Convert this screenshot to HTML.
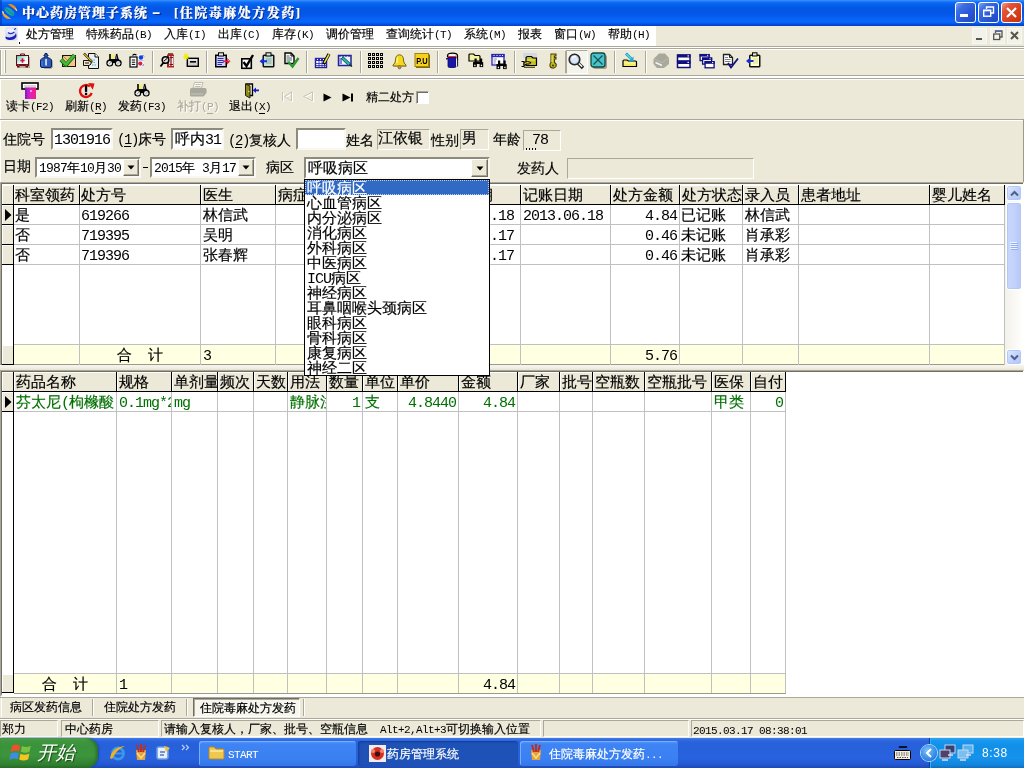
<!DOCTYPE html>
<html lang="zh-CN"><head><meta charset="utf-8"><title>中心药房管理子系统</title>
<style>
html,body{margin:0;padding:0}
body{width:1024px;height:768px;overflow:hidden;position:relative;background:#ECE9D8;font-family:"Liberation Mono","WenQuanYi Zen Hei",monospace;color:#000}
div{position:absolute;box-sizing:border-box}
svg{position:absolute;overflow:visible}
.t{position:absolute;white-space:pre;line-height:1;-webkit-text-stroke:.18px currentColor}
i{font-style:normal;-webkit-text-stroke:0}
.f12{font-size:12px}.f12 i{font-size:11px;letter-spacing:-.6px}
.f13{font-size:13px}.f13 i{letter-spacing:-.8px}
.f14{font-size:14px}.f14 i{letter-spacing:-1.4px}
.f15{font-size:15px}.f15 i{letter-spacing:-1px}
.g{color:#007000}
.w{color:#fff}
.sunk{border:1px solid;border-color:#716F64 #fff #fff #716F64;box-shadow:inset 1px 1px 0 #ACA899}
.inp{background:#fff;border:2px solid;border-color:#8D8B7C #F8F7F0 #F8F7F0 #8D8B7C}
.ro{border:1px solid;border-color:#ACA899 #fff #fff #ACA899}
.hd{background:#ECE9D8;border-right:1px solid #000;border-bottom:1px solid #000;box-shadow:inset 1px 1px 0 #fff}
</style></head>
<body>
<div id="root" style="left:0;top:0;width:1024px;height:768px;will-change:transform">
<div style="left:0px;top:0px;width:1024px;height:26px;background:linear-gradient(to bottom,#3E90FA 0,#2A84FC 1px,#0F70FA 2px,#0868F4 3px,#0560EC 5px,#0458E6 8px,#0456E4 12px,#0558EA 15px,#0660F4 18px,#0868FC 21px,#0660F4 23px,#0450DC 24px,#0340C8 26px)"></div>
<div style="left:0px;top:0px;width:2px;height:26px;background:#0238B8;opacity:.6"></div>
<span class="t w" style="left:22px;top:5px;font:900 13px/15px 'Liberation Serif','Noto Serif CJK SC',serif;letter-spacing:1px;text-shadow:1px 1px 0 #0A2A80">中心药房管理子系统</span>
<span class="t w" style="left:152px;top:5px;font:bold 13px/15px 'Liberation Sans','Noto Sans CJK SC',sans-serif;text-shadow:1px 1px 0 #0A2A80;transform:scaleX(1.9);transform-origin:0 0">-</span>
<span class="t w" style="left:174px;top:5px;font:900 13px/15px 'Liberation Serif','Noto Serif CJK SC',serif;letter-spacing:1.5px;text-shadow:1px 1px 0 #0A2A80">[住院毒麻处方发药]</span>
<svg style="left:0px;top:2px" width="20" height="20" viewBox="0 0 20 20"><defs><clipPath id="lc"><circle cx="9.5" cy="9.500" r="7.600"/></clipPath></defs><g clip-path="url(#lc)"><g transform="rotate(38 9.500 9.500)"><rect x="0" y="1.400" width="20" height="3.300" fill="#F08C1C"/><ellipse cx="9.500" cy="9.500" rx="6" ry="2.900" fill="#18A4B4"/><rect x="4" y="9" width="11" height="1" fill="#0C8898"/><rect x="0" y="14.300" width="20" height="3.300" fill="#F4A824"/></g></g><path d="M15.500 6.500 L16.800 8.800 M2.600 9 L3.600 11.500" stroke="#F4F0E8" stroke-width="1"/></svg>
<div style="left:955px;top:2px;width:21px;height:21px;border:1px solid #fff;border-radius:3px;background:linear-gradient(135deg,#7EA4F4 0,#3D6FE4 25%,#2A58D6 60%,#2048C0 100%)"></div>
<div style="left:960px;top:14px;width:8px;height:3px;background:#fff"></div>
<div style="left:978px;top:2px;width:21px;height:21px;border:1px solid #fff;border-radius:3px;background:linear-gradient(135deg,#7EA4F4 0,#3D6FE4 25%,#2A58D6 60%,#2048C0 100%)"></div>
<svg style="left:982px;top:6px" width="13" height="12" viewBox="0 0 13 12"><path d="M4.5 3 V1 H11.5 V7 H9" stroke="#fff" stroke-width="1.4" fill="none"/><rect x="1.7" y="4.2" width="7" height="6" stroke="#fff" stroke-width="1.4" fill="none"/><path d="M1.7 4.6 H8.7" stroke="#fff" stroke-width="1.4"/></svg>
<div style="left:1001px;top:2px;width:21px;height:21px;border:1px solid #fff;border-radius:3px;background:linear-gradient(135deg,#F0A088 0,#E2573A 25%,#D8401E 60%,#C43010 100%)"></div>
<svg style="left:1005px;top:6px" width="13" height="13" viewBox="0 0 13 13"><path d="M2 2 L11 11 M11 2 L2 11" stroke="#fff" stroke-width="2.2"/></svg>
<div style="left:0px;top:26px;width:656px;height:20px;background:#fff"></div>
<div style="left:0px;top:26px;width:18px;height:20px;background:#F6F4EA"></div>
<div style="left:0px;top:46px;width:1024px;height:1px;background:#ACA899"></div>
<div style="left:0px;top:47px;width:1024px;height:1px;background:#fff"></div>
<svg style="left:4px;top:27px" width="15" height="15" viewBox="0 0 15 15"><rect x="1.500" y="0.500" width="12" height="13" rx="2" fill="#D4D8F8"/><rect x="2.500" y="1.500" width="10" height="5" rx="1" fill="#EEF0FF"/><path d="M11.500 2 Q13 6.500 10 9 Q6 11.500 1.500 9.500 Q1 12.500 5 13 Q10.500 13.500 12.500 9.500" fill="#1A20B0"/><path d="M4 5.500 Q7 8 10.500 5" stroke="#2830B8" stroke-width="1.300" fill="none"/><path d="M10 2.500 L12 1.500" stroke="#2028B0" stroke-width="1.200"/></svg>
<div style="left:19px;top:42px;width:1px;height:2px;background:#000"></div>
<span class="t f12 " style="left:26px;top:29px;">处方管理</span>
<span class="t f12 " style="left:86px;top:29px;">特殊药品<i>(B)</i></span>
<span class="t f12 " style="left:164px;top:29px;">入库<i>(I)</i></span>
<span class="t f12 " style="left:218px;top:29px;">出库<i>(C)</i></span>
<span class="t f12 " style="left:272px;top:29px;">库存<i>(K)</i></span>
<span class="t f12 " style="left:326px;top:29px;">调价管理</span>
<span class="t f12 " style="left:386px;top:29px;">查询统计<i>(T)</i></span>
<span class="t f12 " style="left:464px;top:29px;">系统<i>(M)</i></span>
<span class="t f12 " style="left:518px;top:29px;">报表</span>
<span class="t f12 " style="left:554px;top:29px;">窗口<i>(W)</i></span>
<span class="t f12 " style="left:608px;top:29px;">帮助<i>(H)</i></span>
<div style="left:972px;top:28px;width:15px;height:16px;background:#F3F2EA;border:1px solid #F8F8F2"></div>
<div style="left:990px;top:28px;width:15px;height:16px;background:#F3F2EA;border:1px solid #F8F8F2"></div>
<div style="left:1007px;top:28px;width:15px;height:16px;background:#F3F2EA;border:1px solid #F8F8F2"></div>
<div style="left:976px;top:38px;width:6px;height:2px;background:#55554A"></div>
<svg style="left:993px;top:30px" width="10" height="11" viewBox="0 0 10 11"><path d="M2.5 3 V1 H9 V7 H7" stroke="#55554A" stroke-width="1.3" fill="none"/><rect x="0.7" y="4" width="6" height="5.5" stroke="#55554A" stroke-width="1.3" fill="none"/><path d="M2.5 1.3 H9" stroke="#4466CC" stroke-width="1"/></svg>
<svg style="left:1010px;top:31px" width="9" height="9" viewBox="0 0 9 9"><path d="M1 1 L8 8 M8 1 L1 8" stroke="#55554A" stroke-width="2"/></svg>
<div style="left:0px;top:48px;width:1px;height:27px;background:#ACA899"></div>
<div style="left:1px;top:48px;width:1px;height:27px;background:#fff"></div>
<div style="left:4px;top:50px;width:1px;height:23px;background:#fff"></div>
<div style="left:5px;top:50px;width:1px;height:23px;background:#ACA899"></div>
<div style="left:0px;top:75px;width:1024px;height:1px;background:#ACA899"></div>
<div style="left:0px;top:76px;width:1024px;height:2px;background:#fff"></div>
<div style="left:0px;top:48px;width:1024px;height:1px;background:#ACA899"></div>
<div style="left:0px;top:49px;width:1024px;height:1px;background:#fff"></div>
<div style="left:0px;top:78px;width:1024px;height:1px;background:#ACA899"></div>
<div style="left:0px;top:79px;width:1024px;height:1px;background:#fff"></div>
<div style="left:152px;top:51px;width:1px;height:22px;background:#ACA899"></div>
<div style="left:153px;top:51px;width:1px;height:22px;background:#fff"></div>
<div style="left:206px;top:51px;width:1px;height:22px;background:#ACA899"></div>
<div style="left:207px;top:51px;width:1px;height:22px;background:#fff"></div>
<div style="left:306px;top:51px;width:1px;height:22px;background:#ACA899"></div>
<div style="left:307px;top:51px;width:1px;height:22px;background:#fff"></div>
<div style="left:360px;top:51px;width:1px;height:22px;background:#ACA899"></div>
<div style="left:361px;top:51px;width:1px;height:22px;background:#fff"></div>
<div style="left:437px;top:51px;width:1px;height:22px;background:#ACA899"></div>
<div style="left:438px;top:51px;width:1px;height:22px;background:#fff"></div>
<div style="left:514px;top:51px;width:1px;height:22px;background:#ACA899"></div>
<div style="left:515px;top:51px;width:1px;height:22px;background:#fff"></div>
<div style="left:565px;top:51px;width:1px;height:22px;background:#ACA899"></div>
<div style="left:566px;top:51px;width:1px;height:22px;background:#fff"></div>
<div style="left:614px;top:51px;width:1px;height:22px;background:#ACA899"></div>
<div style="left:615px;top:51px;width:1px;height:22px;background:#fff"></div>
<div style="left:645px;top:51px;width:1px;height:22px;background:#ACA899"></div>
<div style="left:646px;top:51px;width:1px;height:22px;background:#fff"></div>
<div style="left:566px;top:50px;width:22px;height:24px;background:#F4F3EC;border:1px solid;border-color:#ACA899 #fff #fff #ACA899"></div>
<svg style="left:15px;top:53px" width="16" height="16" viewBox="0 0 16 16"><defs><linearGradient id="mk" x1="0" y1="0" x2="1" y2="1"><stop offset="0" stop-color="#48C0B0"/><stop offset=".55" stop-color="#E8FAF6"/><stop offset="1" stop-color="#fff"/></linearGradient></defs><rect x="3" y="4" width="12" height="11" fill="#A09C8C" opacity=".75"/><path d="M5.500 2.500 V1 H9.500 V2.500" stroke="#5C0C14" fill="none"/><rect x="1.500" y="2.500" width="12" height="9" fill="url(#mk)" stroke="#5C0C14"/><path d="M7.500 5.300 V9.700 M5.300 7.500 H9.700" stroke="#E01030" stroke-width="1.700"/><rect x="1" y="11" width="13" height="2" fill="#701018"/><rect x="2" y="13" width="2.500" height="1.500" fill="#5C0C14"/><rect x="10.500" y="13" width="2.500" height="1.500" fill="#5C0C14"/><circle cx="3.300" cy="12.200" r=".6" fill="#E05060"/><circle cx="11.700" cy="12.200" r=".6" fill="#E05060"/></svg>
<svg style="left:39px;top:53px" width="16" height="16" viewBox="0 0 16 16"><path d="M3.500 8 Q3.500 6 6 5.500 H10 Q13.300 6 13.300 8.500 V14 Q13.300 15.300 12 15.300 H5" stroke="#8C8A7C" fill="#8C8A7C" opacity=".7"/><path d="M6 0.500 H8 V2 H9 V3 H8 V4.500 Q12.500 5.200 12.500 8 V13 Q12.500 14.500 11 14.500 H3 Q1.500 14.500 1.500 13 V8 Q1.500 5.200 6 4.500 V3 H5 V2 H6 Z" fill="#2A5CB8" stroke="#0A1E60"/><rect x="6.300" y="6" width="1.500" height="6.500" fill="#F0F4FF"/><path d="M3 8 V13" stroke="#5088E0"/></svg>
<svg style="left:60px;top:53px" width="16" height="16" viewBox="0 0 16 16"><rect x="2.500" y="2.500" width="13" height="11" fill="#F0C888" stroke="#1A1408"/><path d="M3 3 L9 9 L15 3" stroke="#B08850" fill="none"/><path d="M1 6.500 L6 12 L14.500 2" stroke="#1F6A18" stroke-width="4.200" fill="none" stroke-linejoin="round"/><path d="M1.300 6.700 L6 11.600 L14.200 2.200" stroke="#48B838" stroke-width="2.600" fill="none" stroke-linejoin="round"/></svg>
<svg style="left:83px;top:53px" width="16" height="16" viewBox="0 0 16 16"><path d="M5.500 0.500 H12 L15.500 4 V15.500 H5.500 Z" fill="#E4F0F4" stroke="#101010"/><path d="M12 0.500 V4 H15.500" stroke="#101010" fill="#fff"/><path d="M8 7 H13 M8 9.500 H13 M9 12 H13" stroke="#70A0A8" stroke-dasharray="1.500 1"/><path d="M1 0.500 L9 9" stroke="#201000" stroke-width="2.400"/><path d="M1.300 0.800 L8.500 8.500" stroke="#E8C030" stroke-width="1.200"/><path d="M0.500 7.500 H5 L8 8.500 V11 L6 12.500 H0.500 Z" fill="#F4E8C8" stroke="#101010"/><path d="M2 10 H6" stroke="#101010"/></svg>
<svg style="left:106px;top:53px" width="16" height="16" viewBox="0 0 16 16"><path d="M4 1 V7 M10.500 1 L12 7" stroke="#000" stroke-width="1.600"/><rect x="5" y="2" width="4" height="4" fill="#F4F060"/><path d="M9 2 L11 6 H9 Z" fill="#3040C0"/><rect x="3" y="6" width="10" height="4" fill="#000"/><circle cx="3.800" cy="10" r="3.500" fill="#000"/><circle cx="12.200" cy="10" r="3.500" fill="#000"/><circle cx="3.800" cy="10.300" r="2.200" fill="#E8E8E8"/><circle cx="12.200" cy="10.300" r="2.200" fill="#E8E8E8"/><path d="M2.500 11.500 L5 9 M11 11.500 L13.500 9" stroke="#A0A0A0"/></svg>
<svg style="left:129px;top:53px" width="16" height="16" viewBox="0 0 16 16"><path d="M3.500 2.500 Q5 0.500 7.500 2" stroke="#000" fill="none" stroke-width="1.100"/><rect x="1" y="4" width="7" height="10" fill="#fff" stroke="#000" stroke-width="1.200"/><path d="M2.800 7 H6.200 M2.800 9.200 H6.200 M2.800 11.400 H6.200" stroke="#000" stroke-width="1"/><path d="M8.800 2 Q12 -0.300 15.500 2.500 L14.200 8 L15.500 13 Q12 15 9.200 13.500 L10 8 Z" fill="#F4F4FF"/><circle cx="12" cy="4.500" r="2.200" fill="#1840E0"/><circle cx="11.300" cy="10.600" r="2.100" fill="#E02030"/><path d="M9.500 7.600 H14.500" stroke="#B8C0F0"/><path d="M13.500 2 L15 3.500 M13.500 12.800 L15 11.500" stroke="#1830C0" stroke-width=".8"/></svg>
<svg style="left:160px;top:53px" width="16" height="16" viewBox="0 0 16 16"><path d="M7 1.500 H14 V14.500 H7 Z" fill="#B02020"/><rect x="9" y="3" width="4.500" height="10" fill="#F4ECEC"/><path d="M11 3 V13 M9.500 4.500 H13 M9.500 11.500 H13" stroke="#801010" stroke-width="1.200"/><path d="M8 1 H13" stroke="#801818" stroke-width="1.500"/><circle cx="5.500" cy="7" r="3.300" fill="#E8D8D8" stroke="#000" stroke-width="1.600"/><path d="M3.500 9.500 L0.500 13.500" stroke="#000" stroke-width="1.800"/><path d="M4 8 L7 5.500" stroke="#000"/></svg>
<svg style="left:183px;top:53px" width="16" height="16" viewBox="0 0 16 16"><rect x="4.300" y="5.300" width="11" height="8" fill="#D0D0D0" stroke="#000" stroke-width="1.400"/><rect x="7" y="8" width="6" height="1.600" fill="#000"/><path d="M5.500 7 H14" stroke="#F4F4F4"/><path d="M3 0 V7 M0 3.500 H6 M0.800 1.200 L5.200 5.800 M5.200 1.200 L0.800 5.800" stroke="#F0F000" stroke-width="1.100"/></svg>
<svg style="left:214px;top:52px" width="16" height="16" viewBox="0 0 16 16"><rect x="1" y="2.500" width="12" height="13" fill="#000"/><rect x="2.500" y="4" width="9" height="10" fill="#D0D0F8"/><rect x="4.500" y="0.800" width="5" height="3.200" fill="#E8E8E8" stroke="#000"/><path d="M3.500 6.500 H9.500 M3.500 8.500 H9.500 M3.500 10.500 H9.500 M3.500 12.500 H8" stroke="#2030C0" stroke-width="1.200"/><path d="M9 8.500 H13 V6 L16.500 9.300 L13 12.500 V10 H9 Z" fill="#F01828"/><path d="M13.500 7.500 L15.500 9.300" stroke="#F890C0"/></svg>
<svg style="left:240px;top:54px" width="16" height="16" viewBox="0 0 16 16"><rect x="1.800" y="4.800" width="9.500" height="9.500" fill="#fff" stroke="#000" stroke-width="1.600"/><path d="M3.500 8 L6.500 12 L13 1" stroke="#000" stroke-width="2.400" fill="none"/></svg>
<svg style="left:259px;top:52px" width="16" height="16" viewBox="0 0 16 16"><rect x="3.500" y="2.500" width="12" height="13" rx="1.500" fill="#101010"/><rect x="5" y="4" width="9" height="10" fill="#C4E0D4"/><rect x="7" y="0.800" width="5" height="3.200" fill="#D8E8E0" stroke="#000"/><path d="M7 7 H12.500 M7 9 H12.500 M7 11 H12.500" stroke="#88A8A0"/><path d="M8 8.300 H4.500 V6 L0.500 9.200 L4.500 12.500 V10.200 H8 Z" fill="#1030E0"/></svg>
<svg style="left:283px;top:52px" width="16" height="16" viewBox="0 0 16 16"><path d="M2 1 H8 L11 4 V11.500 H2 Z" fill="#fff" stroke="#000" stroke-width="1.400"/><path d="M8 1 V4 H11" stroke="#000" fill="none"/><path d="M3.500 4 H6.500 M3.500 6 H9 M3.500 8 H9 M3.500 10 H7" stroke="#406860" stroke-width="1.100"/><path d="M5.500 10 L9.500 14.500 L15.500 6" stroke="#2C9830" stroke-width="2.400" fill="none"/></svg>
<svg style="left:314px;top:53px" width="16" height="16" viewBox="0 0 16 16"><rect x="1.500" y="5.500" width="11" height="9" fill="#fff" stroke="#2020A0" stroke-width="1.400"/><rect x="1" y="5" width="12" height="3" fill="#2828B0"/><path d="M2 10.500 H12.500 M2 12.500 H12.500 M5 8 V14 M8 8 V14 M10.500 8 V14" stroke="#3838B0" stroke-width=".9"/><path d="M3 6.500 H4 M6 6.500 H7 M9 6.500 H10" stroke="#fff"/><path d="M15 1 L9.500 11" stroke="#000" stroke-width="3.200"/><path d="M15 1.300 L10.300 9.800" stroke="#F0E040" stroke-width="1.600"/></svg>
<svg style="left:337px;top:54px" width="16" height="16" viewBox="0 0 16 16"><rect x="1.500" y="1.500" width="12.500" height="10" fill="#F4F4FF" stroke="#2020A0" stroke-width="1.500"/><path d="M3 1 V3 M6 1 V3 M9 1 V3 M12 1 V3" stroke="#2020A0"/><path d="M2.500 5 H5 M2.500 7 H5 M2.500 9 H5" stroke="#2020A0"/><path d="M5 3.500 L13 11" stroke="#085858" stroke-width="3.400"/><path d="M5.500 4 L12.500 10.500" stroke="#30B8B0" stroke-width="1.800"/><path d="M12.500 10.500 L15 12.500" stroke="#202020" stroke-width="1.400"/></svg>
<svg style="left:368px;top:53px" width="16" height="16" viewBox="0 0 16 16"><rect x="0" y="0" width="3" height="3" fill="#000"/><rect x="1" y="1" width="1" height="1" fill="#ECE9D8"/><rect x="4" y="0" width="3" height="3" fill="#000"/><rect x="5" y="1" width="1" height="1" fill="#ECE9D8"/><rect x="8" y="0" width="3" height="3" fill="#000"/><rect x="9" y="1" width="1" height="1" fill="#ECE9D8"/><rect x="12" y="0" width="3" height="3" fill="#000"/><rect x="13" y="1" width="1" height="1" fill="#ECE9D8"/><rect x="0" y="4" width="3" height="3" fill="#000"/><rect x="1" y="5" width="1" height="1" fill="#ECE9D8"/><rect x="4" y="4" width="3" height="3" fill="#000"/><rect x="5" y="5" width="1" height="1" fill="#ECE9D8"/><rect x="8" y="4" width="3" height="3" fill="#000"/><rect x="9" y="5" width="1" height="1" fill="#ECE9D8"/><rect x="12" y="4" width="3" height="3" fill="#000"/><rect x="13" y="5" width="1" height="1" fill="#ECE9D8"/><rect x="0" y="8" width="3" height="3" fill="#000"/><rect x="1" y="9" width="1" height="1" fill="#ECE9D8"/><rect x="4" y="8" width="3" height="3" fill="#000"/><rect x="5" y="9" width="1" height="1" fill="#ECE9D8"/><rect x="8" y="8" width="3" height="3" fill="#000"/><rect x="9" y="9" width="1" height="1" fill="#ECE9D8"/><rect x="12" y="8" width="3" height="3" fill="#000"/><rect x="13" y="9" width="1" height="1" fill="#ECE9D8"/><rect x="0" y="12" width="3" height="3" fill="#000"/><rect x="1" y="13" width="1" height="1" fill="#ECE9D8"/><rect x="4" y="12" width="3" height="3" fill="#000"/><rect x="5" y="13" width="1" height="1" fill="#ECE9D8"/><rect x="8" y="12" width="3" height="3" fill="#000"/><rect x="9" y="13" width="1" height="1" fill="#ECE9D8"/><rect x="12" y="12" width="3" height="3" fill="#000"/><rect x="13" y="13" width="1" height="1" fill="#ECE9D8"/></svg>
<svg style="left:392px;top:54px" width="16" height="16" viewBox="0 0 16 16"><path d="M7.500 0.800 Q11.500 1 11.500 6 Q11.500 9.500 14 11 V12 H1 V11 Q3.500 9.500 3.500 6 Q3.500 1 7.500 0.800 Z" fill="#F4D820" stroke="#786410" stroke-width="1"/><path d="M5.500 3.500 Q5 6 5 9" stroke="#FFF8A0" stroke-width="1.300" fill="none"/><circle cx="7.500" cy="13.300" r="1.500" fill="#C8A010" stroke="#604C08" stroke-width=".7"/><path d="M2 12.500 H14.500" stroke="#8C8A7C" opacity=".7"/></svg>
<svg style="left:414px;top:52px" width="16" height="16" viewBox="0 0 16 16"><rect x="2" y="2.500" width="14" height="13.500" fill="#7C6C10"/><rect x="1" y="1.500" width="13.500" height="13" fill="#F8D020" stroke="#9C8410" stroke-width="1"/><text x="2.200" y="11.500" font-family="Liberation Sans,sans-serif" font-weight="bold" font-size="8.500" fill="#000" textLength="11.500" lengthAdjust="spacingAndGlyphs">P.U</text></svg>
<svg style="left:444px;top:52px" width="16" height="16" viewBox="0 0 16 16"><path d="M3.500 5 V3.500 Q3.500 1.200 8.500 1.200 Q13.500 1.200 13.500 3.500 V8" stroke="#000" stroke-width="1.200" fill="none"/><path d="M4 3.500 H12.500 V6 H4 Z" fill="#E83030"/><path d="M5 3.300 H11.500" stroke="#fff" stroke-width="1.300"/><path d="M2 7 L4 5.500 H12 V14 Q12 15.500 10.500 15.500 H5.500 Q4 15.500 4 14 V7 Z" fill="#1818A8" stroke="#080860" stroke-width=".8"/><path d="M12.600 6.500 V14" stroke="#F0F0FF" stroke-width="1.100"/><path d="M13.600 7 V14.500" stroke="#000" stroke-width=".9"/></svg>
<svg style="left:468px;top:53px" width="16" height="16" viewBox="0 0 16 16"><path d="M1 2 Q1 1 2 1 H5.500 L7 2.500 H11 Q12 2.500 12 3.500 V8 H1 Z" fill="#F4F49C" stroke="#000" stroke-width="1.200"/><rect x="6.5" y="5.5" width="2.200" height="8" fill="#000"/><rect x="12" y="5.5" width="2.200" height="8" fill="#000"/><rect x="5" y="9.1" width="3.600" height="5" fill="#000"/><rect x="11.6" y="9.1" width="3.600" height="5" fill="#000"/><rect x="8" y="8.5" width="4" height="2.500" fill="#000"/><rect x="6.2" y="11.7" width="1.300" height="1.500" fill="#fff"/><rect x="12.8" y="11.7" width="1.300" height="1.500" fill="#fff"/></svg>
<svg style="left:491px;top:53px" width="17" height="17" viewBox="0 0 17 17"><rect x="1" y="1.500" width="12" height="10.500" fill="#fff" stroke="#2828B0" stroke-width="1.300"/><rect x="0.500" y="1" width="13" height="3.200" fill="#2828B0"/><path d="M2.500 2.500 H3.500 M5.500 2.500 H6.500 M8.500 2.500 H9.500 M11 2.500 H12" stroke="#fff"/><path d="M2.500 6 H6 M2.500 8 H5 M2.500 10 H4.500" stroke="#8888C8"/><rect x="7.0" y="7.5" width="2.200" height="8" fill="#000"/><rect x="12.5" y="7.5" width="2.200" height="8" fill="#000"/><rect x="5.5" y="11.1" width="3.600" height="5" fill="#000"/><rect x="12.1" y="11.1" width="3.600" height="5" fill="#000"/><rect x="8.5" y="10.5" width="4" height="2.500" fill="#000"/><rect x="6.7" y="13.7" width="1.300" height="1.500" fill="#fff"/><rect x="13.3" y="13.7" width="1.300" height="1.500" fill="#fff"/></svg>
<svg style="left:521px;top:52px" width="16" height="16" viewBox="0 0 16 16"><rect x="2" y="1" width="14" height="5" fill="#D4D8E4"/><path d="M5 6.500 Q5 4.500 7 4.500 H10.500 L12 6 H15.500 V13.500 H5 Z" fill="#C8C020" stroke="#000" stroke-width="1.200"/><path d="M6 8 H14" stroke="#ECE870"/><path d="M0.500 9.500 H3 V14.500 H0.500" stroke="#000" fill="none" stroke-width="1.100"/><path d="M3 10.500 L6.500 9.500 L10 10.500 L8.500 12 H5 L3 13.500 Z" fill="#D8D040" stroke="#000" stroke-width="1"/><path d="M3 15.300 H14" stroke="#504808" stroke-width="1.200"/></svg>
<svg style="left:545px;top:53px" width="16" height="16" viewBox="0 0 16 16"><path d="M6 1 H11 V3 H9.500 V4.500 H11 V6 H9.500 V9.500 Q12 11 11 13.500 Q9.500 15.500 7.500 15 Q4.500 14.500 5 11.500 Q5.300 10 6 9.500 Z" fill="#C4BC18" stroke="#484008" stroke-width="1.100"/><circle cx="8" cy="12.500" r="1.100" fill="#484008"/><path d="M7 2 V9" stroke="#F0EC80"/></svg>
<svg style="left:568px;top:53px" width="16" height="16" viewBox="0 0 16 16"><path d="M10 10 L15 15" stroke="#202020" stroke-width="3.400"/><path d="M10 9.600 L14.200 13.800" stroke="#F4F4F4" stroke-width="1.500"/><circle cx="6.500" cy="6.500" r="5.300" fill="#B8C4D8" stroke="#282828" stroke-width="1.600"/><circle cx="6.500" cy="6.500" r="3.600" fill="#DCE8F8"/><path d="M4 5 Q5.500 3 8 3.500" stroke="#fff" stroke-width="1.600" fill="none"/></svg>
<svg style="left:590px;top:52px" width="18" height="18" viewBox="0 0 18 18"><rect x="3" y="3" width="14" height="14" rx="2" fill="#8C8478" opacity=".75"/><rect x="1" y="1" width="14" height="14" rx="2.500" fill="#48C4C4" stroke="#104848" stroke-width="1.300"/><path d="M3.500 3.500 L12.500 12.500 M12.500 3.500 L3.500 12.500" stroke="#105060" stroke-width="1.200"/></svg>
<svg style="left:622px;top:53px" width="16" height="16" viewBox="0 0 16 16"><path d="M1 8 Q1 7 2 7 H5 L6.500 8 H13.500 Q14.500 8 14.500 9 V13.500 H1 Z" fill="#F4E860" stroke="#000" stroke-width="1.200"/><path d="M2 10 H13.500" stroke="#FCF8B0"/><path d="M4 0.500 L10 6.500" stroke="#1890C8" stroke-width="2.600"/><path d="M4.500 1 L9.500 6" stroke="#50E0F0" stroke-width="1.300"/><path d="M11.500 3.500 V8.500 H6.500 Z" fill="#20A8D8"/></svg>
<svg style="left:653px;top:53px" width="17" height="16" viewBox="0 0 17 16"><path d="M6 0.500 H12 L16 5 V11 L11 15 H4 L0.500 11 V6 Z" fill="#A8A89C"/><path d="M2.500 9.500 L9 12.500" stroke="#F4F4F0" stroke-width="1.400"/><path d="M1 6 L9 9.500 L15.500 5" stroke="#B8B8AC" fill="none"/></svg>
<svg style="left:676px;top:54px" width="16" height="16" viewBox="0 0 16 16"><rect x="1.500" y="1" width="12.500" height="6" fill="#fff" stroke="#101080" stroke-width="1.500"/><rect x="1" y="0.500" width="13.500" height="3" fill="#101080"/><rect x="1.500" y="7.500" width="12.500" height="6" fill="#fff" stroke="#101080" stroke-width="1.500"/><rect x="1" y="7" width="13.500" height="3" fill="#101080"/><rect x="11.500" y="1.300" width="1.400" height="1.200" fill="#fff"/><rect x="11.500" y="7.800" width="1.400" height="1.200" fill="#fff"/></svg>
<svg style="left:699px;top:53px" width="17" height="16" viewBox="0 0 17 16"><rect x="1.1" y="1.6" width="9" height="6" fill="#fff" stroke="#101080" stroke-width="1.300"/><rect x="0.5" y="1" width="10.200" height="2.600" fill="#101080"/><rect x="8.0" y="1.8" width="1.200" height="1" fill="#fff"/><rect x="3.6" y="5.1" width="9" height="6" fill="#fff" stroke="#101080" stroke-width="1.300"/><rect x="3" y="4.5" width="10.200" height="2.600" fill="#101080"/><rect x="10.5" y="5.3" width="1.200" height="1" fill="#fff"/><rect x="6.1" y="8.799999999999999" width="9" height="6" fill="#fff" stroke="#101080" stroke-width="1.300"/><rect x="5.5" y="8.2" width="10.200" height="2.600" fill="#101080"/><rect x="13.0" y="9.0" width="1.200" height="1" fill="#fff"/></svg>
<svg style="left:722px;top:53px" width="17" height="16" viewBox="0 0 17 16"><path d="M1.500 1.500 H7.500 L10.500 4.500 V11.500 H1.500 Z" fill="#fff" stroke="#202020" stroke-width="1.300"/><path d="M7.500 1.500 V4.500 H10.500" stroke="#202020" fill="none"/><path d="M3 4.500 H6 M3 6.500 H8.500 M3 8.500 H8.500" stroke="#808080" stroke-width="1.100"/><path d="M6 10 L9 14.500 L16 5.500" stroke="#101080" stroke-width="1.800" fill="none"/></svg>
<svg style="left:745px;top:52px" width="16" height="16" viewBox="0 0 16 16"><rect x="4" y="2.500" width="11.500" height="13" rx="1.500" fill="#101010"/><rect x="5.500" y="4" width="8.500" height="10" fill="#FFFFC4"/><rect x="7.500" y="0.800" width="4.500" height="3.200" fill="#E0E0D0" stroke="#000"/><path d="M8 7 H13 M8 9 H13 M8 11 H13" stroke="#D8D8A0"/><path d="M8.500 8 H5 V5.800 L1 9 L5 12.200 V10 H8.500 Z" fill="#1030D0"/></svg>
<svg style="left:21px;top:82px" width="18" height="18" viewBox="0 0 18 18"><rect x="1" y="1" width="16" height="6" fill="#fff" stroke="#000" stroke-width="1.600"/><rect x="3" y="3" width="12" height="3" fill="#D8D8D8"/><defs><linearGradient id="cg" x1="0" x2="1"><stop offset="0" stop-color="#9020D0"/><stop offset=".5" stop-color="#E020C0"/><stop offset="1" stop-color="#F02080"/></linearGradient></defs><rect x="4" y="5.500" width="11" height="11.500" fill="url(#cg)"/><circle cx="10" cy="9" r="1" fill="#F8C0E0"/><path d="M5 7 V16" stroke="#6010A0" stroke-dasharray="1 1"/></svg>
<svg style="left:78px;top:82px" width="17" height="17" viewBox="0 0 17 17"><path d="M11.900 4.400 A6 6 0 1 0 13.700 11" stroke="#E01010" stroke-width="2.300" fill="none"/><path d="M10.200 1 L16.500 1.600 L14.800 7.800 Z" fill="#E01010"/><rect x="6.900" y="3.300" width="2.300" height="6.600" fill="#000"/><rect x="6.900" y="10.800" width="2.300" height="2.300" fill="#000"/></svg>
<svg style="left:134px;top:83px" width="16" height="16" viewBox="0 0 16 16"><path d="M4 1 V7 M10.500 1 L12 7" stroke="#000" stroke-width="1.600"/><rect x="5" y="2" width="4" height="4" fill="#F4F060"/><path d="M9 2 L11 6 H9 Z" fill="#3040C0"/><rect x="3" y="6" width="10" height="4" fill="#000"/><circle cx="3.800" cy="10" r="3.500" fill="#000"/><circle cx="12.200" cy="10" r="3.500" fill="#000"/><circle cx="3.800" cy="10.300" r="2.200" fill="#E8E8E8"/><circle cx="12.200" cy="10.300" r="2.200" fill="#E8E8E8"/><path d="M2.500 11.500 L5 9 M11 11.500 L13.500 9" stroke="#A0A0A0"/></svg>
<svg style="left:190px;top:82px" width="17" height="16" viewBox="0 0 17 16"><path d="M4.500 0.500 H13 L11.500 6 H3 Z" fill="#F8F8F4" stroke="#B0AEA0" stroke-width=".8"/><path d="M5.500 2.500 H11 M5 4.500 H10.500" stroke="#C0BEB0"/><path d="M1.500 6 H15 Q16.500 6 16.500 7.500 V11 L13.500 14.500 H1.500 Q0 14.500 0 13 V7.500 Q0 6 1.500 6 Z" fill="#A8A89C"/><path d="M1 12 H13" stroke="#C4C4B8"/></svg>
<svg style="left:244px;top:83px" width="16" height="16" viewBox="0 0 16 16"><path d="M1.500 1 H8.500 V12.500 H6" stroke="#000" stroke-width="1.300" fill="none"/><path d="M1.500 1 L6 3 V15 L1.500 12.500 Z" fill="#8C8820" stroke="#202000" stroke-width="1"/><circle cx="4.800" cy="8.500" r=".7" fill="#F8F060"/><path d="M15 6.500 H12 V4.500 L8.800 7.300 L12 10 V8.200 H15 Z" fill="#1020C0"/></svg>
<div style="left:0px;top:119px;width:1024px;height:1px;background:#ACA899"></div>
<div style="left:0px;top:120px;width:1024px;height:1px;background:#fff"></div>
<span class="t f12 " style="left:6px;top:101px;">读卡<i>(F2)</i></span>
<span class="t f12 " style="left:65px;top:101px;">刷新<i>(R)</i></span>
<span class="t f12 " style="left:118px;top:101px;">发药<i>(F3)</i></span>
<span class="t f12 " style="left:178px;top:102px;color:#fff">补打<i>(P)</i></span>
<span class="t f12 " style="left:177px;top:101px;color:#ACA899">补打<i>(P)</i></span>
<span class="t f12 " style="left:229px;top:101px;">退出<i>(X)</i></span>
<div style="left:95px;top:113px;width:6px;height:1px;background:#000"></div>
<div style="left:207px;top:113px;width:6px;height:1px;background:#ACA899"></div>
<div style="left:259px;top:113px;width:6px;height:1px;background:#000"></div>
<span class="t f12 " style="left:366px;top:92px;">精二处方</span>
<div style="left:416px;top:91px;width:13px;height:13px;background:#fff;border:1px solid;border-color:#ACA899 #fff #fff #ACA899;box-shadow:inset 1px 1px 0 #716F64"></div>
<svg style="left:280px;top:91px" width="80" height="13" viewBox="0 0 80 13"><g fill="none" stroke="#fff" stroke-width="1"><path d="M3.5 2 V11 M12.5 2 L5.5 6.5 L12.5 11 Z"/><path d="M33.5 2 L24.5 6.5 L33.5 11 Z"/></g><g fill="none" stroke="#C8C5B8" stroke-width="1"><path d="M2.5 1 V10 M11.5 1 L4.5 5.5 L11.5 10 Z"/><path d="M32.5 1 L23.5 5.5 L32.5 10 Z"/></g><path d="M43.500 2.500 L51.500 6.500 L43.500 10.500 Z" fill="#000"/><path d="M62.500 2.500 L70.500 6.500 L62.500 10.500 Z M71 2.500 H73 V10.500 H71 Z" fill="#000"/></svg>
<span class="t f14 " style="left:3px;top:133px;">住院号</span>
<div class="inp" style="left:51px;top:128px;width:62px;height:22px;"></div>
<span class="t f15 " style="left:54px;top:133px;"><i>1301916</i></span>
<span class="t f14 " style="left:117px;top:133px;"><i>(1)</i>床号</span>
<div style="left:124px;top:146px;width:7px;height:1px;background:#000"></div>
<div class="inp" style="left:171px;top:128px;width:53px;height:22px;"></div>
<span class="t f15 " style="left:175px;top:133px;">呼内<i>31</i></span>
<span class="t f14 " style="left:228px;top:134px;"><i>(2)</i>复核人</span>
<div style="left:235px;top:147px;width:7px;height:1px;background:#000"></div>
<div class="inp" style="left:296px;top:128px;width:50px;height:22px;"></div>
<span class="t f14 " style="left:346px;top:134px;">姓名</span>
<div class="ro" style="left:377px;top:129px;width:53px;height:21px;"></div>
<span class="t f15 " style="left:378px;top:132px;">江依银</span>
<span class="t f14 " style="left:431px;top:134px;">性别</span>
<div class="ro" style="left:460px;top:129px;width:29px;height:21px;"></div>
<span class="t f15 " style="left:462px;top:132px;">男</span>
<span class="t f14 " style="left:493px;top:133px;">年龄</span>
<div class="ro" style="left:523px;top:130px;width:38px;height:21px;"></div>
<span class="t f15 " style="left:532px;top:133px;"><i>78</i></span>
<div style="left:526px;top:148px;width:1px;height:2px;background:#000"></div>
<div style="left:529px;top:148px;width:1px;height:2px;background:#000"></div>
<div style="left:532px;top:148px;width:1px;height:2px;background:#000"></div>
<div style="left:535px;top:148px;width:1px;height:2px;background:#000"></div>
<span class="t f14 " style="left:3px;top:160px;">日期</span>
<div class="inp" style="left:35px;top:157px;width:106px;height:21px;"></div>
<span class="t f13 " style="left:39px;top:162px;"><i>1987</i>年<i>10</i>月<i>30</i></span>
<div style="left:123px;top:159px;width:16px;height:17px;background:#ECE9D8;border:1px solid;border-color:#fff #716F64 #716F64 #fff;box-shadow:inset -1px -1px 0 #ACA899"></div>
<svg style="left:127px;top:165px" width="8" height="5" viewBox="0 0 8 5"><path d="M0.5 0.5 H7.5 L4 4.5 Z" fill="#000"/></svg>
<div style="left:143px;top:167px;width:5px;height:1px;background:#000"></div>
<div class="inp" style="left:150px;top:157px;width:106px;height:21px;"></div>
<span class="t f13 " style="left:154px;top:162px;"><i>2015</i>年<i> 3</i>月<i>17</i></span>
<div style="left:238px;top:159px;width:16px;height:17px;background:#ECE9D8;border:1px solid;border-color:#fff #716F64 #716F64 #fff;box-shadow:inset -1px -1px 0 #ACA899"></div>
<svg style="left:242px;top:165px" width="8" height="5" viewBox="0 0 8 5"><path d="M0.5 0.5 H7.5 L4 4.5 Z" fill="#000"/></svg>
<span class="t f14 " style="left:266px;top:161px;">病区</span>
<div class="inp" style="left:304px;top:157px;width:186px;height:22px;"></div>
<span class="t f15 " style="left:308px;top:162px;">呼吸病区</span>
<div style="left:471px;top:159px;width:17px;height:18px;background:#ECE9D8;border:1px solid;border-color:#fff #716F64 #716F64 #fff;box-shadow:inset -1px -1px 0 #ACA899"></div>
<svg style="left:476px;top:166px" width="8" height="5" viewBox="0 0 8 5"><path d="M0.5 0.5 H7.5 L4 4.5 Z" fill="#000"/></svg>
<span class="t f14 " style="left:517px;top:162px;">发药人</span>
<div class="ro" style="left:567px;top:158px;width:187px;height:21px;"></div>
<div style="left:1023px;top:119px;width:1px;height:64px;background:#9C9A8C"></div>
<div style="left:0px;top:80px;width:1px;height:39px;background:#fff"></div>
<div style="left:0px;top:121px;width:1px;height:61px;background:#fff"></div>
<div style="left:0px;top:182px;width:1024px;height:183px;background:#fff;border:2px solid;border-width:2px 2px 0 2px;border-color:#ACA899 #fff #fff #ACA899"></div>
<div style="left:1px;top:183px;width:1022px;height:1px;background:#716F64"></div>
<div style="left:1px;top:183px;width:1px;height:182px;background:#716F64"></div>
<div class="hd" style="left:2px;top:185px;width:12px;height:20px;"></div>
<div class="hd" style="left:14px;top:185px;width:66px;height:20px;"></div>
<span class="t f15 " style="left:15px;top:189px;">科室领药</span>
<div style="left:79px;top:205px;width:1px;height:160px;background:#C0C0C0"></div>
<div class="hd" style="left:80px;top:185px;width:121px;height:20px;"></div>
<span class="t f15 " style="left:81px;top:189px;">处方号</span>
<div style="left:200px;top:205px;width:1px;height:160px;background:#C0C0C0"></div>
<div class="hd" style="left:201px;top:185px;width:75px;height:20px;"></div>
<span class="t f15 " style="left:203px;top:189px;">医生</span>
<div style="left:275px;top:205px;width:1px;height:160px;background:#C0C0C0"></div>
<div class="hd" style="left:276px;top:185px;width:155px;height:20px;"></div>
<span class="t f15 " style="left:278px;top:189px;">病症</span>
<div style="left:430px;top:205px;width:1px;height:160px;background:#C0C0C0"></div>
<div class="hd" style="left:431px;top:185px;width:90px;height:20px;"></div>
<span class="t f15 " style="left:433px;top:189px;">开方日期</span>
<div style="left:520px;top:205px;width:1px;height:160px;background:#C0C0C0"></div>
<div class="hd" style="left:521px;top:185px;width:90px;height:20px;"></div>
<span class="t f15 " style="left:523px;top:189px;">记账日期</span>
<div style="left:610px;top:205px;width:1px;height:160px;background:#C0C0C0"></div>
<div class="hd" style="left:611px;top:185px;width:69px;height:20px;"></div>
<span class="t f15 " style="left:613px;top:189px;">处方金额</span>
<div style="left:679px;top:205px;width:1px;height:160px;background:#C0C0C0"></div>
<div class="hd" style="left:680px;top:185px;width:63px;height:20px;"></div>
<span class="t f15 " style="left:682px;top:189px;">处方状态</span>
<div style="left:742px;top:205px;width:1px;height:160px;background:#C0C0C0"></div>
<div class="hd" style="left:743px;top:185px;width:56px;height:20px;"></div>
<span class="t f15 " style="left:745px;top:189px;">录入员</span>
<div style="left:798px;top:205px;width:1px;height:160px;background:#C0C0C0"></div>
<div class="hd" style="left:799px;top:185px;width:131px;height:20px;"></div>
<span class="t f15 " style="left:801px;top:189px;">患者地址</span>
<div style="left:929px;top:205px;width:1px;height:160px;background:#C0C0C0"></div>
<div class="hd" style="left:930px;top:185px;width:75px;height:20px;"></div>
<span class="t f15 " style="left:932px;top:189px;">婴儿姓名</span>
<div style="left:1004px;top:205px;width:1px;height:160px;background:#C0C0C0"></div>
<div style="left:14px;top:224px;width:991px;height:1px;background:#C0C0C0"></div>
<div class="hd" style="left:2px;top:205px;width:12px;height:20px;"></div>
<span class="t f15 " style="left:15px;top:209px;">是</span>
<span class="t f15 " style="left:81px;top:209px;"><i>619266</i></span>
<span class="t f15 " style="left:203px;top:209px;">林信武</span>
<span class="t f15 " style="left:434px;top:209px;"><i>2013.06.18</i></span>
<span class="t f15 " style="left:523px;top:209px;"><i>2013.06.18</i></span>
<span class="t f15" style="right:347px;top:209px"><i>4.84</i></span>
<span class="t f15 " style="left:681px;top:209px;">已记账</span>
<span class="t f15 " style="left:745px;top:209px;">林信武</span>
<div style="left:14px;top:244px;width:991px;height:1px;background:#C0C0C0"></div>
<div class="hd" style="left:2px;top:225px;width:12px;height:20px;"></div>
<span class="t f15 " style="left:15px;top:229px;">否</span>
<span class="t f15 " style="left:81px;top:229px;"><i>719395</i></span>
<span class="t f15 " style="left:203px;top:229px;">吴明</span>
<span class="t f15 " style="left:434px;top:229px;"><i>2015.03.17</i></span>
<span class="t f15 " style="left:523px;top:229px;"></span>
<span class="t f15" style="right:347px;top:229px"><i>0.46</i></span>
<span class="t f15 " style="left:681px;top:229px;">未记账</span>
<span class="t f15 " style="left:745px;top:229px;">肖承彩</span>
<div style="left:14px;top:264px;width:991px;height:1px;background:#C0C0C0"></div>
<div class="hd" style="left:2px;top:245px;width:12px;height:20px;"></div>
<span class="t f15 " style="left:15px;top:249px;">否</span>
<span class="t f15 " style="left:81px;top:249px;"><i>719396</i></span>
<span class="t f15 " style="left:203px;top:249px;">张春辉</span>
<span class="t f15 " style="left:434px;top:249px;"><i>2015.03.17</i></span>
<span class="t f15 " style="left:523px;top:249px;"></span>
<span class="t f15" style="right:347px;top:249px"><i>0.46</i></span>
<span class="t f15 " style="left:681px;top:249px;">未记账</span>
<span class="t f15 " style="left:745px;top:249px;">肖承彩</span>
<svg style="left:5px;top:209px" width="7" height="12" viewBox="0 0 7 12"><path d="M0 0 L6.5 6 L0 12 Z" fill="#000"/></svg>
<div style="left:13px;top:265px;width:1px;height:80px;background:#000"></div>
<div style="left:14px;top:344px;width:991px;height:1px;background:#C0C0C0"></div>
<div style="left:14px;top:345px;width:991px;height:19px;background:#FFFFE1"></div>
<div style="left:14px;top:364px;width:991px;height:1px;background:#9C9A8C"></div>
<div class="hd" style="left:2px;top:345px;width:12px;height:20px;"></div>
<div style="left:79px;top:345px;width:1px;height:20px;background:#C0C0C0"></div>
<div style="left:200px;top:345px;width:1px;height:20px;background:#C0C0C0"></div>
<div style="left:275px;top:345px;width:1px;height:20px;background:#C0C0C0"></div>
<div style="left:430px;top:345px;width:1px;height:20px;background:#C0C0C0"></div>
<div style="left:520px;top:345px;width:1px;height:20px;background:#C0C0C0"></div>
<div style="left:610px;top:345px;width:1px;height:20px;background:#C0C0C0"></div>
<div style="left:679px;top:345px;width:1px;height:20px;background:#C0C0C0"></div>
<div style="left:742px;top:345px;width:1px;height:20px;background:#C0C0C0"></div>
<div style="left:798px;top:345px;width:1px;height:20px;background:#C0C0C0"></div>
<div style="left:929px;top:345px;width:1px;height:20px;background:#C0C0C0"></div>
<div style="left:1004px;top:345px;width:1px;height:20px;background:#C0C0C0"></div>
<span class="t f15 " style="left:117px;top:349px;">合<i>  </i>计</span>
<span class="t f15 " style="left:203px;top:349px;"><i>3</i></span>
<span class="t f15" style="right:347px;top:349px"><i>5.76</i></span>
<div style="left:1005px;top:185px;width:17px;height:180px;background:linear-gradient(to right,#F3F1EC,#FEFEFB)"></div>
<div style="left:1006px;top:185px;width:16px;height:16px;background:linear-gradient(135deg,#E1EAFE,#C3D3FD 50%,#B0C4F8);border:1px solid #fff;border-radius:3px;box-shadow:inset 0 0 0 1px #B4C8F6"></div>
<svg style="left:1009.5px;top:190px" width="9" height="7" viewBox="0 0 9 7"><path d="M1 5.5 L4.5 2 L8 5.5" stroke="#4D6185" stroke-width="2" fill="none"/></svg>
<div style="left:1006px;top:349px;width:16px;height:16px;background:linear-gradient(135deg,#E1EAFE,#C3D3FD 50%,#B0C4F8);border:1px solid #fff;border-radius:3px;box-shadow:inset 0 0 0 1px #B4C8F6"></div>
<svg style="left:1009.5px;top:354px" width="9" height="7" viewBox="0 0 9 7"><path d="M1 1.5 L4.5 5 L8 1.5" stroke="#4D6185" stroke-width="2" fill="none"/></svg>
<div style="left:1006px;top:202px;width:16px;height:88px;background:linear-gradient(to right,#C8D6FB,#C2D2FC 50%,#B5C7F5);border:1px solid #fff;border-radius:3px;box-shadow:inset 0 0 0 1px #B4C8F6"></div>
<div style="left:1010px;top:242px;width:7px;height:1px;background:#EEF4FE"></div>
<div style="left:1011px;top:243px;width:7px;height:1px;background:#8CB0F8"></div>
<div style="left:1010px;top:244px;width:7px;height:1px;background:#EEF4FE"></div>
<div style="left:1011px;top:245px;width:7px;height:1px;background:#8CB0F8"></div>
<div style="left:1010px;top:246px;width:7px;height:1px;background:#EEF4FE"></div>
<div style="left:1011px;top:247px;width:7px;height:1px;background:#8CB0F8"></div>
<div style="left:1010px;top:248px;width:7px;height:1px;background:#EEF4FE"></div>
<div style="left:1011px;top:249px;width:7px;height:1px;background:#8CB0F8"></div>
<div style="left:0px;top:365px;width:1024px;height:5px;background:linear-gradient(to bottom,#F6F5EE,#F1EFE4 60%,#E4E1D0)"></div>
<div style="left:0px;top:370px;width:1024px;height:327px;background:#fff;border:2px solid;border-color:#ACA899 #fff #fff #ACA899"></div>
<div style="left:1px;top:371px;width:1022px;height:1px;background:#716F64"></div>
<div style="left:1px;top:371px;width:1px;height:323px;background:#716F64"></div>
<div class="hd" style="left:2px;top:372px;width:12px;height:20px;"></div>
<div class="hd" style="left:14px;top:372px;width:103px;height:20px;"></div>
<div style="left:15px;top:372px;width:101px;height:19px;overflow:hidden"><span class="t f15" style="left:1px;top:4px">药品名称</span></div>
<div style="left:116px;top:392px;width:1px;height:301px;background:#C0C0C0"></div>
<div class="hd" style="left:117px;top:372px;width:55px;height:20px;"></div>
<div style="left:118px;top:372px;width:53px;height:19px;overflow:hidden"><span class="t f15" style="left:1px;top:4px">规格</span></div>
<div style="left:171px;top:392px;width:1px;height:301px;background:#C0C0C0"></div>
<div class="hd" style="left:172px;top:372px;width:46px;height:20px;"></div>
<div style="left:173px;top:372px;width:44px;height:19px;overflow:hidden"><span class="t f15" style="left:1px;top:4px">单剂量</span></div>
<div style="left:217px;top:392px;width:1px;height:301px;background:#C0C0C0"></div>
<div class="hd" style="left:218px;top:372px;width:36px;height:20px;"></div>
<div style="left:219px;top:372px;width:34px;height:19px;overflow:hidden"><span class="t f15" style="left:1px;top:4px">频次</span></div>
<div style="left:253px;top:392px;width:1px;height:301px;background:#C0C0C0"></div>
<div class="hd" style="left:254px;top:372px;width:34px;height:20px;"></div>
<div style="left:255px;top:372px;width:32px;height:19px;overflow:hidden"><span class="t f15" style="left:1px;top:4px">天数</span></div>
<div style="left:287px;top:392px;width:1px;height:301px;background:#C0C0C0"></div>
<div class="hd" style="left:288px;top:372px;width:39px;height:20px;"></div>
<div style="left:289px;top:372px;width:37px;height:19px;overflow:hidden"><span class="t f15" style="left:1px;top:4px">用法</span></div>
<div style="left:326px;top:392px;width:1px;height:301px;background:#C0C0C0"></div>
<div class="hd" style="left:327px;top:372px;width:36px;height:20px;"></div>
<div style="left:328px;top:372px;width:34px;height:19px;overflow:hidden"><span class="t f15" style="left:1px;top:4px">数量</span></div>
<div style="left:362px;top:392px;width:1px;height:301px;background:#C0C0C0"></div>
<div class="hd" style="left:363px;top:372px;width:35px;height:20px;"></div>
<div style="left:364px;top:372px;width:33px;height:19px;overflow:hidden"><span class="t f15" style="left:1px;top:4px">单位</span></div>
<div style="left:397px;top:392px;width:1px;height:301px;background:#C0C0C0"></div>
<div class="hd" style="left:398px;top:372px;width:61px;height:20px;"></div>
<div style="left:399px;top:372px;width:59px;height:19px;overflow:hidden"><span class="t f15" style="left:1px;top:4px">单价</span></div>
<div style="left:458px;top:392px;width:1px;height:301px;background:#C0C0C0"></div>
<div class="hd" style="left:459px;top:372px;width:59px;height:20px;"></div>
<div style="left:460px;top:372px;width:57px;height:19px;overflow:hidden"><span class="t f15" style="left:1px;top:4px">金额</span></div>
<div style="left:517px;top:392px;width:1px;height:301px;background:#C0C0C0"></div>
<div class="hd" style="left:518px;top:372px;width:42px;height:20px;"></div>
<div style="left:519px;top:372px;width:40px;height:19px;overflow:hidden"><span class="t f15" style="left:1px;top:4px">厂家</span></div>
<div style="left:559px;top:392px;width:1px;height:301px;background:#C0C0C0"></div>
<div class="hd" style="left:560px;top:372px;width:33px;height:20px;"></div>
<div style="left:561px;top:372px;width:31px;height:19px;overflow:hidden"><span class="t f15" style="left:1px;top:4px">批号</span></div>
<div style="left:592px;top:392px;width:1px;height:301px;background:#C0C0C0"></div>
<div class="hd" style="left:593px;top:372px;width:52px;height:20px;"></div>
<div style="left:594px;top:372px;width:50px;height:19px;overflow:hidden"><span class="t f15" style="left:1px;top:4px">空瓶数</span></div>
<div style="left:644px;top:392px;width:1px;height:301px;background:#C0C0C0"></div>
<div class="hd" style="left:645px;top:372px;width:67px;height:20px;"></div>
<div style="left:646px;top:372px;width:65px;height:19px;overflow:hidden"><span class="t f15" style="left:1px;top:4px">空瓶批号</span></div>
<div style="left:711px;top:392px;width:1px;height:301px;background:#C0C0C0"></div>
<div class="hd" style="left:712px;top:372px;width:39px;height:20px;"></div>
<div style="left:713px;top:372px;width:37px;height:19px;overflow:hidden"><span class="t f15" style="left:1px;top:4px">医保</span></div>
<div style="left:750px;top:392px;width:1px;height:301px;background:#C0C0C0"></div>
<div class="hd" style="left:751px;top:372px;width:35px;height:20px;"></div>
<div style="left:752px;top:372px;width:33px;height:19px;overflow:hidden"><span class="t f15" style="left:1px;top:4px">自付</span></div>
<div style="left:785px;top:392px;width:1px;height:301px;background:#C0C0C0"></div>
<div style="left:14px;top:411px;width:772px;height:1px;background:#C0C0C0"></div>
<div class="hd" style="left:2px;top:392px;width:12px;height:20px;"></div>
<svg style="left:5px;top:396px" width="7" height="12" viewBox="0 0 7 12"><path d="M0 0 L6.5 6 L0 12 Z" fill="#000"/></svg>
<div style="left:15px;top:392px;width:101px;height:19px;overflow:hidden"><span class="t f15 g" style="left:1px;top:4px">芬太尼<i>(</i>枸橼酸</span></div>
<div style="left:118px;top:392px;width:53px;height:19px;overflow:hidden"><span class="t f15 g" style="left:1px;top:4px"><i>0.1mg*2ml</i></span></div>
<div style="left:173px;top:392px;width:44px;height:19px;overflow:hidden"><span class="t f15 g" style="left:1px;top:4px"><i>mg</i></span></div>
<div style="left:289px;top:392px;width:37px;height:19px;overflow:hidden"><span class="t f15 g" style="left:1px;top:4px">静脉注射</span></div>
<span class="t f15 g" style="right:664px;top:396px"><i>1</i></span>
<div style="left:364px;top:392px;width:33px;height:19px;overflow:hidden"><span class="t f15 g" style="left:1px;top:4px">支</span></div>
<span class="t f15 g" style="right:568px;top:396px"><i>4.8440</i></span>
<span class="t f15 g" style="right:509px;top:396px"><i>4.84</i></span>
<div style="left:713px;top:392px;width:37px;height:19px;overflow:hidden"><span class="t f15 g" style="left:1px;top:4px">甲类</span></div>
<span class="t f15 g" style="right:241px;top:396px"><i>0</i></span>
<div style="left:13px;top:412px;width:1px;height:262px;background:#000"></div>
<div style="left:14px;top:673px;width:772px;height:1px;background:#C0C0C0"></div>
<div style="left:14px;top:674px;width:772px;height:19px;background:#FFFFE1"></div>
<div style="left:14px;top:693px;width:772px;height:1px;background:#9C9A8C"></div>
<div class="hd" style="left:2px;top:674px;width:12px;height:19px;"></div>
<div style="left:116px;top:674px;width:1px;height:19px;background:#C0C0C0"></div>
<div style="left:171px;top:674px;width:1px;height:19px;background:#C0C0C0"></div>
<div style="left:217px;top:674px;width:1px;height:19px;background:#C0C0C0"></div>
<div style="left:253px;top:674px;width:1px;height:19px;background:#C0C0C0"></div>
<div style="left:287px;top:674px;width:1px;height:19px;background:#C0C0C0"></div>
<div style="left:326px;top:674px;width:1px;height:19px;background:#C0C0C0"></div>
<div style="left:362px;top:674px;width:1px;height:19px;background:#C0C0C0"></div>
<div style="left:397px;top:674px;width:1px;height:19px;background:#C0C0C0"></div>
<div style="left:458px;top:674px;width:1px;height:19px;background:#C0C0C0"></div>
<div style="left:517px;top:674px;width:1px;height:19px;background:#C0C0C0"></div>
<div style="left:559px;top:674px;width:1px;height:19px;background:#C0C0C0"></div>
<div style="left:592px;top:674px;width:1px;height:19px;background:#C0C0C0"></div>
<div style="left:644px;top:674px;width:1px;height:19px;background:#C0C0C0"></div>
<div style="left:711px;top:674px;width:1px;height:19px;background:#C0C0C0"></div>
<div style="left:750px;top:674px;width:1px;height:19px;background:#C0C0C0"></div>
<div style="left:785px;top:674px;width:1px;height:19px;background:#C0C0C0"></div>
<span class="t f15 " style="left:42px;top:678px;">合<i>  </i>计</span>
<span class="t f15 " style="left:119px;top:678px;"><i>1</i></span>
<span class="t f15" style="right:509px;top:678px"><i>4.84</i></span>
<div style="left:304px;top:179px;width:186px;height:197px;background:#fff;border:1px solid #000"></div>
<div style="left:305px;top:180px;width:184px;height:15px;background:#316AC5;border:1px dotted #B8CCEE"></div>
<span class="t f15 " style="left:307px;top:182px;color:#fff">呼吸病区</span>
<span class="t f15 " style="left:307px;top:197px;">心血管病区</span>
<span class="t f15 " style="left:307px;top:212px;">内分泌病区</span>
<span class="t f15 " style="left:307px;top:227px;">消化病区</span>
<span class="t f15 " style="left:307px;top:242px;">外科病区</span>
<span class="t f15 " style="left:307px;top:257px;">中医病区</span>
<span class="t f15 " style="left:307px;top:272px;"><i>ICU</i>病区</span>
<span class="t f15 " style="left:307px;top:287px;">神经病区</span>
<span class="t f15 " style="left:307px;top:302px;">耳鼻咽喉头颈病区</span>
<span class="t f15 " style="left:307px;top:317px;">眼科病区</span>
<span class="t f15 " style="left:307px;top:332px;">骨科病区</span>
<span class="t f15 " style="left:307px;top:347px;">康复病区</span>
<span class="t f15 " style="left:307px;top:362px;">神经二区</span>
<div style="left:0px;top:697px;width:1024px;height:1px;background:#ACA899"></div>
<div style="left:0px;top:718px;width:1024px;height:1px;background:#ACA899"></div>
<div style="left:0px;top:719px;width:1024px;height:1px;background:#fff"></div>
<div style="left:1px;top:698px;width:1px;height:19px;background:#fff"></div>
<div style="left:92px;top:699px;width:1px;height:17px;background:#ACA899"></div>
<div style="left:93px;top:699px;width:1px;height:17px;background:#fff"></div>
<div style="left:186px;top:699px;width:1px;height:17px;background:#ACA899"></div>
<div style="left:187px;top:699px;width:1px;height:17px;background:#fff"></div>
<div style="left:193px;top:698px;width:107px;height:19px;background:#F6F5EE;border:1px solid;border-color:#716F64 #fff #fff #716F64;box-shadow:inset 1px 1px 0 #ACA899"></div>
<div style="left:303px;top:699px;width:1px;height:17px;background:#ACA899"></div>
<div style="left:304px;top:699px;width:1px;height:17px;background:#fff"></div>
<span class="t f12 " style="left:10px;top:702px;">病区发药信息</span>
<span class="t f12 " style="left:104px;top:702px;">住院处方发药</span>
<span class="t f12 " style="left:200px;top:703px;">住院毒麻处方发药</span>
<div style="left:0px;top:720px;width:58px;height:17px;border:1px solid;border-color:#ACA899 #fff #fff #ACA899"></div>
<div style="left:61px;top:720px;width:98px;height:17px;border:1px solid;border-color:#ACA899 #fff #fff #ACA899"></div>
<div style="left:161px;top:720px;width:380px;height:17px;border:1px solid;border-color:#ACA899 #fff #fff #ACA899"></div>
<div style="left:543px;top:720px;width:146px;height:17px;border:1px solid;border-color:#ACA899 #fff #fff #ACA899"></div>
<div style="left:691px;top:720px;width:333px;height:17px;border:1px solid;border-color:#ACA899 #fff #fff #ACA899"></div>
<span class="t f12 " style="left:2px;top:724px;">郑力</span>
<span class="t f12 " style="left:65px;top:724px;">中心药房</span>
<span class="t f12 " style="left:164px;top:724px;">请输入复核人，厂家、批号、空瓶信息<i>  Alt+2,Alt+3</i>可切换输入位置</span>
<span class="t f12 " style="left:693px;top:725px;"><i>2015.03.17 08:38:01</i></span>
<div style="left:0px;top:738px;width:1024px;height:30px;background:linear-gradient(to bottom,#3E7FF0 0,#3169E0 2px,#2A62DC 4px,#2660DA 8px,#2962DE 20px,#245AD4 26px,#1C48B8 30px)"></div>
<div style="left:0px;top:738px;width:98px;height:30px;background:linear-gradient(to bottom,#5CAE5C 0,#3F963F 3px,#3A923A 8px,#3C943C 18px,#2F7F2F 27px,#246A24 30px);border-radius:0 12px 12px 0;box-shadow:inset -2px 0 3px #2A702A, 1px 0 2px #1C48A8"></div>
<svg style="left:9px;top:742px" width="23" height="21" viewBox="-0.5 0 19.500 17.500"><path d="M2 3 Q5 1 9 3 L8 8 Q5 6.5 1 8.5 Z" fill="#E8532B"/><path d="M10.5 3.3 Q14 5 18 3 L17 8 Q13.5 10 9.5 8.2 Z" fill="#7CC242"/><path d="M0.8 9.8 Q4.5 8 7.8 9.5 L6.8 14.5 Q3.5 13 -0.2 15 Z" fill="#3C8DE8"/><path d="M9.2 9.8 Q13 11.5 16.8 9.5 L15.8 14.5 Q12 16.5 8.2 14.7 Z" fill="#F8C420"/></svg>
<span class="t w" style="left:37px;top:742px;font:italic 19px/22px 'Liberation Sans','WenQuanYi Zen Hei',sans-serif;-webkit-text-stroke:0;text-shadow:1px 1px 1px #1C4A1C">开始</span>
<svg style="left:109px;top:744px" width="18" height="18" viewBox="0 0 18 18"><circle cx="9" cy="9.5" r="5.6" fill="none" stroke="#3A9AE8" stroke-width="2.6"/><path d="M4 9.5 H14" stroke="#3A9AE8" stroke-width="2"/><path d="M1 14 Q3 3 16 2 Q8 5 3 15 Z" fill="#F0B020"/></svg>
<svg style="left:133px;top:744px" width="16" height="18" viewBox="0 0 16 18"><path d="M3 6 H13 L12 16 H4 Z" fill="#E8A040"/><path d="M4 1 L6 8 M8 0 V8 M12 1 L10 8" stroke="#C03020" stroke-width="2"/><path d="M4 9 L8 14 L12 9" stroke="#F8E080" stroke-width="1.6" fill="none"/></svg>
<svg style="left:155px;top:744px" width="17" height="17" viewBox="0 0 17 17"><rect x="2" y="3" width="11" height="12" rx="2" fill="#E8F0FC" stroke="#6A9AE0" stroke-width="1.6"/><path d="M5 8 H10 M5 11 H9" stroke="#5078C0" stroke-width="1.4"/><path d="M9 2 L15 4 L11 8 Z" fill="#F0C040"/></svg>
<svg style="left:181px;top:744px" width="9" height="7" viewBox="0 0 9 7"><path d="M1 1 L3.5 3.5 L1 6 M5 1 L7.5 3.5 L5 6" stroke="#B8D0FA" stroke-width="1.2" fill="none"/></svg>
<div style="left:199px;top:741px;width:157px;height:25px;background:linear-gradient(to bottom,#5A9BFA 0,#3E84F4 3px,#3A80F2 18px,#3476E6 25px);border-radius:3px;box-shadow:inset 1px 1px 0 #78AEFC"></div>
<svg style="left:208px;top:745px" width="18" height="16" viewBox="0 0 18 16"><path d="M1 3 Q1 2 2 2 H6 L8 4 H15 Q16 4 16 5 V13 Q16 14 15 14 H2 Q1 14 1 13 Z" fill="#F0C850" stroke="#B88A20" stroke-width="1"/><path d="M2 6 H15" stroke="#FBE8A0" stroke-width="1.5"/></svg>
<span class="t f12 " style="left:228px;top:749px;color:#fff"><i>START</i></span>
<div style="left:358px;top:741px;width:160px;height:25px;background:#1E52B7;border-radius:3px;box-shadow:inset 1px 1px 2px #143C90"></div>
<svg style="left:369px;top:745px" width="17" height="17" viewBox="0 0 17 17"><rect x="0" y="0" width="17" height="17" fill="#F4ECEC"/><circle cx="8.5" cy="8.5" r="6.5" fill="#D83020"/><circle cx="8.5" cy="9" r="2.6" fill="#401010"/><circle cx="4" cy="6" r="2" fill="#F08878"/><circle cx="13" cy="6" r="2" fill="#F08878"/></svg>
<span class="t f12 " style="left:387px;top:749px;color:#fff">药房管理系统</span>
<div style="left:520px;top:741px;width:158px;height:25px;background:linear-gradient(to bottom,#5A9BFA 0,#3E84F4 3px,#3A80F2 18px,#3476E6 25px);border-radius:3px;box-shadow:inset 1px 1px 0 #78AEFC"></div>
<svg style="left:528px;top:744px" width="16" height="18" viewBox="0 0 16 18"><path d="M3 6 H13 L12 16 H4 Z" fill="#E8A040"/><path d="M4 1 L6 8 M8 0 V8 M12 1 L10 8" stroke="#C03020" stroke-width="2"/><path d="M4 9 L8 14 L12 9" stroke="#F8E080" stroke-width="1.6" fill="none"/></svg>
<span class="t f12 " style="left:549px;top:749px;color:#fff">住院毒麻处方发药<i>...</i></span>
<div style="left:929px;top:738px;width:95px;height:30px;background:linear-gradient(to bottom,#2FA6F2 0,#1596EE 3px,#1290E8 8px,#1592EC 20px,#1284DC 27px,#0E6EC0 30px);border-left:1px solid #0A3C9C;box-shadow:inset 1px 0 0 #38B0F8"></div>
<svg style="left:894px;top:746px" width="17" height="15" viewBox="0 0 17 15"><path d="M5 2 L6 0 L7 2 L8 0 L9 2 L10 0 L11 2 L12 0 L13 2" stroke="#000" stroke-width="1" fill="none"/><rect x="0.5" y="4.5" width="16" height="9" rx="1" fill="#F4F0E0" stroke="#000"/><path d="M2 7 H15 M2 9 H15 M3 11.5 H14" stroke="#555" stroke-width="1" stroke-dasharray="1.5 1"/></svg>
<div style="left:921px;top:745px;width:16px;height:16px;border-radius:8px;background:radial-gradient(circle at 40% 35%,#7CC4FC,#2A80E4 70%,#1C60C8);box-shadow:0 0 0 1px #B8DCFC"></div>
<svg style="left:925px;top:748px" width="8" height="10" viewBox="0 0 8 10"><path d="M6 1 L2 5 L6 9" stroke="#fff" stroke-width="2" fill="none"/></svg>
<svg style="left:939px;top:744px" width="17" height="18" viewBox="0 0 17 18"><rect x="6" y="1" width="10" height="8" fill="#3A4070" stroke="#C8D8F0" stroke-width="1"/><rect x="1" y="6" width="10" height="8" fill="#50406A" stroke="#C8D8F0" stroke-width="1"/><path d="M3 16 H9 M9 11 H14" stroke="#D8E0F0" stroke-width="1.5"/></svg>
<svg style="left:957px;top:744px" width="17" height="18" viewBox="0 0 17 18"><rect x="6" y="1" width="10" height="8" fill="#58B0F0" stroke="#C8D8F0" stroke-width="1"/><rect x="1" y="6" width="10" height="8" fill="#78C0F4" stroke="#C8D8F0" stroke-width="1"/><path d="M3 16 H9 M9 11 H14" stroke="#D8E0F0" stroke-width="1.5"/></svg>
<span class="t" style="left:982px;top:746px;font:12px/14px 'Liberation Sans',sans-serif;color:#fff;letter-spacing:.6px;-webkit-text-stroke:0">8:38</span>
</div>
</body></html>
